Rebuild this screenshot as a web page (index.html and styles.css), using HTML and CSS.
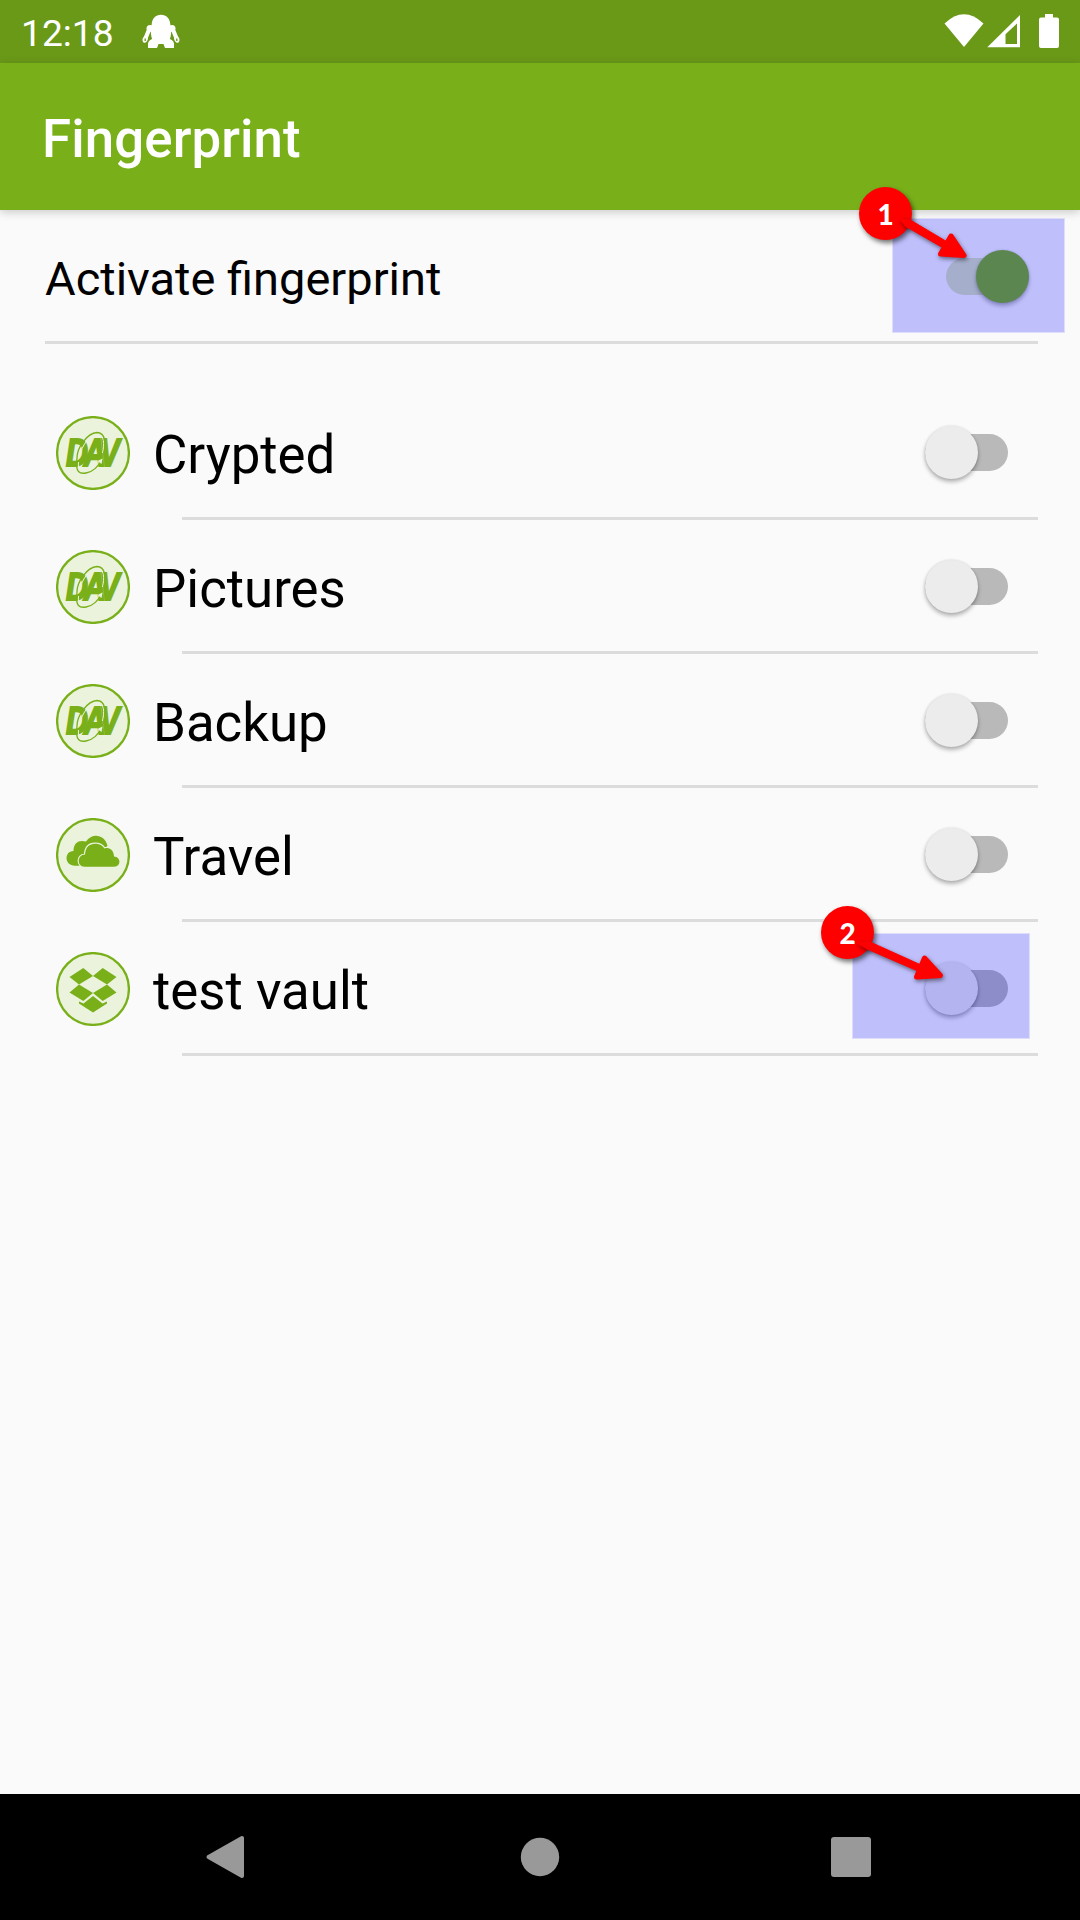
FILE: index.html
```
<!DOCTYPE html>
<html lang="en">
<head>
<meta charset="utf-8">
<title>Fingerprint</title>
<link rel="stylesheet" href="styles.css">
</head>
<body>
<svg class="defs" width="0" height="0" aria-hidden="true">
  <symbol id="dav" viewBox="0 0 74 74">
    <circle cx="37" cy="37" r="35.9" fill="#ebf3dc" stroke="#79b01a" stroke-width="2.3"/>
    <text class="dav-text" transform="translate(10 50.200) scale(.8 1)" fill="#79b01a" stroke="#79b01a" stroke-width="2">DAV</text>
    <g fill="none">
      <path d="M24 39C25.500 31 33 18.500 41 18C48.500 18 48.500 29 46.500 37M22.500 46C21.500 55 26 56 31 55.500C37 54.500 42 49 44 44" stroke="#ebf3dc" stroke-width="1"/>
      <path d="M21 42C21 32 31 17 41 16.500C50 16.500 50 29 48 37M21 42C19 57 24 58 30 57C37 56 43 50 45 44" stroke="#79b01a" stroke-width="1.300"/>
    </g>
    <path d="M46.500 42.500l-5 2.500 4 3z" fill="#ebf3dc"/>
  </symbol>
  <symbol id="onedrive" viewBox="0 0 74 74">
    <circle cx="37" cy="37" r="35.9" fill="#ebf3dc" stroke="#79b01a" stroke-width="2.3"/>
    <path d="M24 47.700H19C8 47.700 8 33 17.500 33C17.500 24.500 23 21.500 30 23.500C36 14.500 49 16.500 51.500 28L45 33L30 38Z" fill="#79b01a"/>
    <path class="front-cloud" d="M28.500 48.700C20.800 48.700 20.800 36.700 29 36.500C29.500 29 33.500 25.700 39 25.700C44 25.700 47 28 48.500 30.500C54 28.500 58 33 58 38.500C65.300 39 65.300 48.700 58 48.700Z" fill="#79b01a" stroke="#ebf3dc" stroke-width="2.400"/>
  </symbol>
  <symbol id="dropbox" viewBox="0 0 74 74">
    <circle cx="37" cy="37" r="35.9" fill="#ebf3dc" stroke="#79b01a" stroke-width="2.3"/>
    <path d="M27.300 16L37 24 23 32.500 13.500 25ZM46.700 16L60.500 25 51 32.500 37 24ZM23 32.500L37 41 27.300 49 13.500 40.500ZM51 32.500L60.500 40.500 46.700 49 37 41ZM37 44L46.500 51.500 51 49.500V51.500L37 60.500 23 51.500V49.500L27.500 51.500Z" fill="#79b01a"/>
  </symbol>
</svg>

<div class="screen">
  <header class="status-bar">
    <span class="clock">12:18</span>
    <svg class="robot" width="40" height="36" viewBox="0 0 40 36" fill="#fff">
      <path d="M20 .800c5.500 0 9 4 9.300 9.500C30 14 30.500 17 30 20c-.300 4-1.500 6.500-3.500 8.500h-13C11.500 26.500 10.300 24 10 20c-.500-3 0-6 .700-9.700C11 4.800 14.500.800 20 .800z"/>
      <path d="M7 34v-4.500C7.500 26.500 10 25 12 25h16c2 0 4.500 1.500 5 4.500V34h-9l-1.500-4h-5L16 34z"/>
      <circle cx="9" cy="14.500" r="3.500"/><circle cx="31" cy="14.500" r="3.500"/>
      <path d="M7.500 17L4 25.500M32.500 17L36 25.500" fill="none" stroke="#fff" stroke-width="4.200" stroke-linecap="round"/>
      <path d="M4 22c-3 1.500-3 5-1.500 6.500 2 1 4-1 4.500-4zM36 22c3 1.500 3 5 1.500 6.500-2 1-4-1-4.500-4z"/>
      <path d="M4.200 24.500v2.500M35.800 24.500v2.500" stroke="#6a9918" stroke-width="1.300"/>
    </svg>
    <div class="system-icons">
      <svg width="40" height="34" viewBox="0 0 40 34" fill="#fff"><path d="M.500 9.500Q20-9 39.500 9.500L20 33z"/></svg>
      <svg width="33" height="34" viewBox="0 0 33 34"><path d="M33 1V33.300H.300zM30 9.500L18.500 20.300V30H30z" fill="#fff" fill-rule="evenodd"/></svg>
      <svg class="battery" width="20" height="34" viewBox="0 0 20 34" fill="#fff"><path d="M6 0h8v3.500h4q2 0 2 2V32q0 2-2 2H2q-2 0-2-2V5.500q0-2 2-2h4z"/></svg>
    </div>
  </header>
  <div class="app-bar"><h1>Fingerprint</h1></div>

  <main>
    <div class="activate">
      <span class="label">Activate fingerprint</span>
      <span class="switch on"><span class="thumb"></span></span>
    </div>
    <ul class="vaults">
      <li><svg class="icon"><use href="#dav"/></svg><span class="name">Crypted</span><span class="switch"><span class="thumb"></span></span></li>
      <li><svg class="icon"><use href="#dav"/></svg><span class="name">Pictures</span><span class="switch"><span class="thumb"></span></span></li>
      <li><svg class="icon"><use href="#dav"/></svg><span class="name">Backup</span><span class="switch"><span class="thumb"></span></span></li>
      <li><svg class="icon"><use href="#onedrive"/></svg><span class="name">Travel</span><span class="switch"><span class="thumb"></span></span></li>
      <li><svg class="icon"><use href="#dropbox"/></svg><span class="name">test vault</span><span class="switch"><span class="thumb"></span></span></li>
    </ul>
  </main>

  <nav class="nav-bar">
    <svg width="80" height="80" viewBox="0 0 80 80"><path d="M53 21V59L19.500 40z" fill="#999" stroke="#999" stroke-width="4" stroke-linejoin="round"/></svg>
    <svg width="80" height="80" viewBox="0 0 80 80"><circle cx="40" cy="40" r="19.200" fill="#999"/></svg>
    <svg width="80" height="80" viewBox="0 0 80 80"><rect x="20" y="20" width="40" height="40" rx="3" fill="#999"/></svg>
  </nav>

  <div class="highlight highlight-one"></div>
  <div class="highlight highlight-two"></div>
  <div class="badge badge-one">1</div>
  <div class="badge badge-two">2</div>
  <svg class="arrows" width="1080" height="1000" viewBox="0 0 1080 1000" fill="#f00" stroke="#f00" stroke-linejoin="round">
    <path d="M900 219L909.500 219.500 949 243 946 249.500 905 226z" stroke-width="1"/>
    <path d="M951 236L964 255.500 940.500 254z" stroke-width="5"/>
    <path d="M857 943L869 941.500 921 965 919 971.500 867 949z" stroke-width="1"/>
    <path d="M924.500 958L940.500 975.500 916.500 977z" stroke-width="5"/>
  </svg>
</div>
</body>
</html>
```
FILE: styles.css
```
* { box-sizing: border-box; }
body { margin: 0; background: #fafafa; font-family: Roboto, sans-serif; color: #000; }
svg { display: block; flex: none; }
.defs { position: absolute; }
.dav-text { font: italic 700 38px "Liberation Sans", sans-serif; letter-spacing: -5.2px; }
.front-cloud { paint-order: stroke; }

.screen { position: relative; width: 1080px; height: 1920px; display: flex; flex-direction: column; overflow: hidden; }

.status-bar { height: 63px; flex: none; display: flex; align-items: center; padding: 0 21px 0 21px; background: #6a9918; color: #fff; }
.clock { width: 120px; font-size: 37.2px; line-height: 42px; padding-top: 3px; }
.robot { margin-top: 1px; }
.system-icons { display: flex; margin-left: auto; padding-bottom: 2px; }
.system-icons svg + svg { margin-left: 3px; }
.system-icons .battery { margin-left: 19px; }

.app-bar { height: 147px; flex: none; display: flex; align-items: center; padding: 5px 42px 0; background: #79b01a; box-shadow: 0 2px 9px rgba(0, 0, 0, .2); }
h1 { margin: 0; font-size: 52.8px; font-weight: 500; line-height: 60px; letter-spacing: .1px; color: #fff; }

main { flex: 1; padding: 0 42px 0 45px; }
.activate { height: 134px; display: flex; align-items: center; justify-content: space-between; padding: 2px 9px 0 0; border-bottom: 3px solid #dcdcdc; font-size: 47px; }
.label { padding-top: 4px; }

.vaults { list-style: none; margin: 42px 0 0; padding: 0; }
.vaults li { height: 134px; display: flex; align-items: center; padding: 0 30px 0 11px; background: linear-gradient(#dcdcdc, #dcdcdc) 137px 100% / 856px 3px no-repeat; }
.icon { width: 74px; height: 74px; }
.name { flex: 1; margin-left: 23px; padding-top: 3px; font-size: 52.8px; line-height: 62px; }

.switch { width: 83px; height: 37px; border-radius: 19px; display: flex; align-items: center; flex: none; background: #b9b9b9; }
.vaults .switch { margin-bottom: 1px; }
.thumb { width: 53px; height: 53px; flex: none; border-radius: 50%; background: #ececec; box-shadow: 0 3px 4px rgba(0, 0, 0, .28), 0 0 3px rgba(0, 0, 0, .12); }
.switch.on { justify-content: flex-end; background: #d8e5bb; }
.on .thumb { background: #79b01a; }

.nav-bar { height: 126px; flex: none; display: flex; align-items: center; justify-content: space-between; padding: 0 189px; background: #000; }

/* Tutorial annotations layered over the screen */
.highlight { position: absolute; background: rgba(0, 0, 255, .236); background-clip: padding-box; border: 1px solid rgba(0, 0, 255, .11); }
.highlight-one { left: 892px; top: 218px; width: 173px; height: 115px; }
.highlight-two { left: 852px; top: 933px; width: 178px; height: 106px; }
.badge { position: absolute; width: 53px; height: 53px; border-radius: 50%; background: #f00; color: #fff; font: 900 28px/55px Lato, sans-serif; text-align: center; box-shadow: 2px 3px 5px rgba(0, 0, 0, .55); }
.badge-one { left: 859px; top: 187px; }
.badge-two { left: 821px; top: 906px; }
.arrows { position: absolute; left: 0; top: 0; filter: drop-shadow(1px 2px 2px rgba(0, 0, 0, .5)); }
```
